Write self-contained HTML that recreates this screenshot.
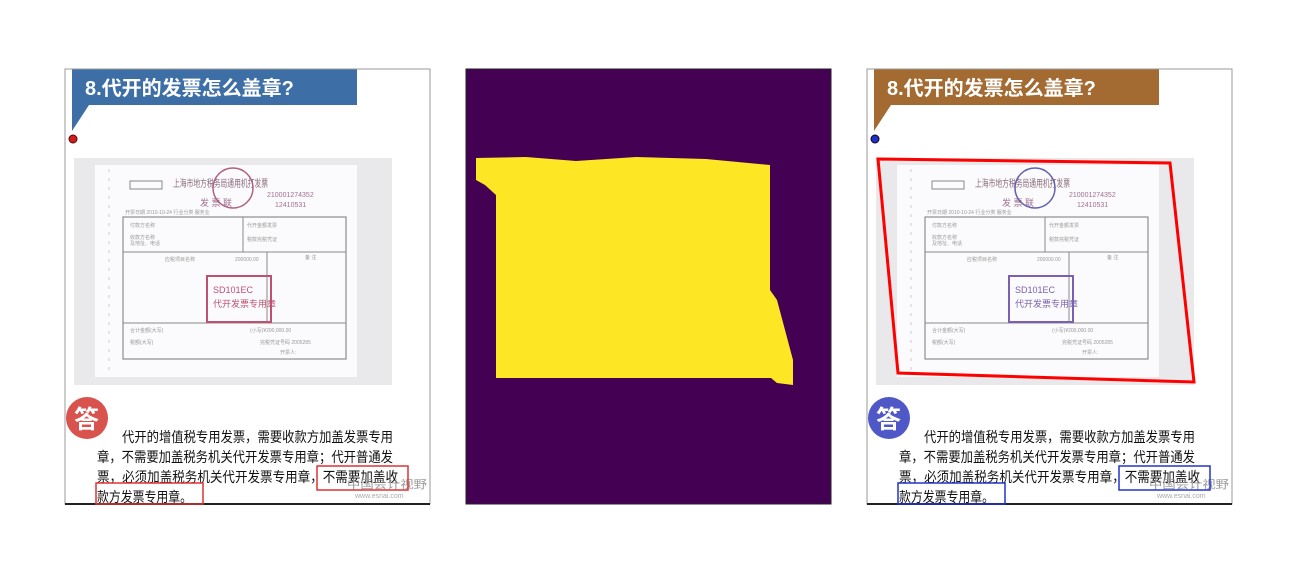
<!DOCTYPE html>
<html><head><meta charset="utf-8"><style>
html,body{margin:0;padding:0;background:#fff;width:1296px;height:576px;overflow:hidden}
svg{position:absolute;top:0;left:0}
text{font-family:"Liberation Sans","Noto Sans CJK SC",sans-serif}
</style></head><body>
<svg width="1296" height="576" viewBox="0 0 1296 576">
<defs>
<g id="inv">
  <rect x="9" y="89" width="318" height="227" fill="#e9e9eb"/>
  <rect x="30" y="96" width="262" height="212" fill="#fbfbfd"/>
  <rect x="58" y="148" width="223" height="142" fill="none" stroke="#777" stroke-width="1"/>
  <line x1="58" y1="183" x2="281" y2="183" stroke="#888"/>
  <line x1="58" y1="254" x2="281" y2="254" stroke="#888"/>
  <line x1="178" y1="148" x2="178" y2="183" stroke="#888"/>
  <line x1="202" y1="183" x2="202" y2="254" stroke="#888"/>
  <line x1="44" y1="100" x2="44" y2="305" stroke="#ccc" stroke-dasharray="3,6"/>
  <rect x="65" y="112" width="32" height="8" fill="none" stroke="#888"/>
  <text x="108" y="118" font-size="10" fill="#8a6a7a" textLength="95" lengthAdjust="spacingAndGlyphs">上海市地方税务局通用机打发票</text>
  <text x="202" y="128" font-size="7" fill="#a07090">210001274352</text>
  <text x="210" y="138" font-size="7" fill="#a07090">12410531</text>
  <text x="135" y="137" font-size="9" fill="#a07090">发  票  联</text>
  <g fill="#999" font-size="5">
   <text x="60" y="145">开票日期 2010-10-24 行业分类 服务业</text>
   <text x="65" y="158">付款方名称</text><text x="65" y="170">收款方名称</text><text x="65" y="176">及地址、电话</text>
   <text x="182" y="158">代开金额发票</text><text x="182" y="172">税款完税凭证</text>
   <text x="100" y="192">应税项目名称</text><text x="170" y="192">200000.00</text><text x="240" y="190">备 注</text>
   <text x="65" y="263">合计金额(大写)</text><text x="185" y="263">(小写)¥200,000.00</text>
   <text x="65" y="275">税额(大写)</text><text x="195" y="275">完税凭证号码 2005285</text>
   <text x="215" y="285">开票人:</text>
  </g>
</g>
<g id="txt">
  <text x="57" y="373" font-size="14" fill="#111" textLength="271" lengthAdjust="spacingAndGlyphs">代开的增值税专用发票，需要收款方加盖发票专用</text>
  <text x="32" y="393" font-size="14" fill="#111" textLength="296" lengthAdjust="spacingAndGlyphs">章，不需要加盖税务机关代开发票专用章；代开普通发</text>
  <text x="32" y="413" font-size="14" fill="#111" textLength="301" lengthAdjust="spacingAndGlyphs">票，必须加盖税务机关代开发票专用章，不需要加盖收</text>
  <text x="32" y="433" font-size="14" fill="#111" textLength="95" lengthAdjust="spacingAndGlyphs">款方发票专用章。</text>
  <text x="282" y="419" font-size="11" fill="#999" textLength="80" lengthAdjust="spacingAndGlyphs">中国会计视野</text>
  <text x="290" y="429" font-size="7" fill="#aaa">www.esnai.com</text>
  <rect x="0" y="0" width="365" height="435" fill="none" stroke="#999" stroke-width="1"/>
  <line x1="0" y1="435" x2="365" y2="435" stroke="#222" stroke-width="2"/>
</g>
</defs>

<!-- left panel -->
<g transform="translate(65,69)">
  <rect width="365" height="435" fill="#fff"/>
  <rect x="7" y="0" width="285" height="36" fill="#3d6ea6"/>
  <polygon points="7,36 24,36 7,62" fill="#3d6ea6"/>
  <text x="20" y="26" font-size="20" font-weight="bold" fill="#fff">8.代开的发票怎么盖章?</text>
  <circle cx="8" cy="70" r="4" fill="#c82020" stroke="#600" stroke-width="1"/>
  <use href="#inv"/>
  <rect x="142" y="207" width="64" height="46" fill="none" stroke="#c05070" stroke-width="2"/>
  <text x="148" y="224" font-size="9" fill="#c05070">SD101EC</text>
  <text x="148" y="238" font-size="9" fill="#c05070">代开发票专用章</text>
  <circle cx="168" cy="119" r="20" fill="none" stroke="#b06080" stroke-width="1.5"/>
  <circle cx="22" cy="349" r="21" fill="#d9534e"/>
  <text x="9" y="359" font-size="25" font-weight="bold" fill="#fff">答</text>
  <use href="#txt"/>
  <rect x="252" y="397" width="91" height="24" fill="none" stroke="#d33" stroke-width="1.5"/>
  <rect x="31" y="414" width="107" height="21" fill="none" stroke="#d33" stroke-width="1.5"/>
</g>

<!-- middle panel -->
<g transform="translate(466,69)">
  <rect width="365" height="435" fill="#440154"/>
  <polygon points="10,89 60,88 110,92 170,88 240,90 304,96 304,221 311,231 319,261 327,291 327,316 311,314 305,309 30,309 30,126 19,116 10,111" fill="#fde725"/>
  <rect x="0" y="0" width="365" height="435" fill="none" stroke="#222" stroke-width="1"/>
</g>

<!-- right panel -->
<g transform="translate(867,69)">
  <rect width="365" height="435" fill="#fff"/>
  <rect x="7" y="0" width="285" height="36" fill="#a36a32"/>
  <polygon points="7,36 24,36 7,62" fill="#a36a32"/>
  <text x="20" y="26" font-size="20" font-weight="bold" fill="#fff">8.代开的发票怎么盖章?</text>
  <circle cx="8" cy="70" r="4" fill="#2030c0" stroke="#102" stroke-width="1"/>
  <use href="#inv"/>
  <rect x="142" y="207" width="64" height="46" fill="none" stroke="#7a60b0" stroke-width="2"/>
  <text x="148" y="224" font-size="9" fill="#7a60b0">SD101EC</text>
  <text x="148" y="238" font-size="9" fill="#7a60b0">代开发票专用章</text>
  <circle cx="168" cy="119" r="20" fill="none" stroke="#6060b0" stroke-width="1.5"/>
  <polygon points="11,90 303,94 327,313 31,304" fill="none" stroke="#f00" stroke-width="3"/>
  <circle cx="22" cy="349" r="21" fill="#5058c8"/>
  <text x="9" y="359" font-size="25" font-weight="bold" fill="#fff">答</text>
  <use href="#txt"/>
  <rect x="252" y="397" width="91" height="24" fill="none" stroke="#2233cc" stroke-width="1.5"/>
  <rect x="31" y="414" width="107" height="21" fill="none" stroke="#2233cc" stroke-width="1.5"/>
</g>
</svg>
</body></html>
